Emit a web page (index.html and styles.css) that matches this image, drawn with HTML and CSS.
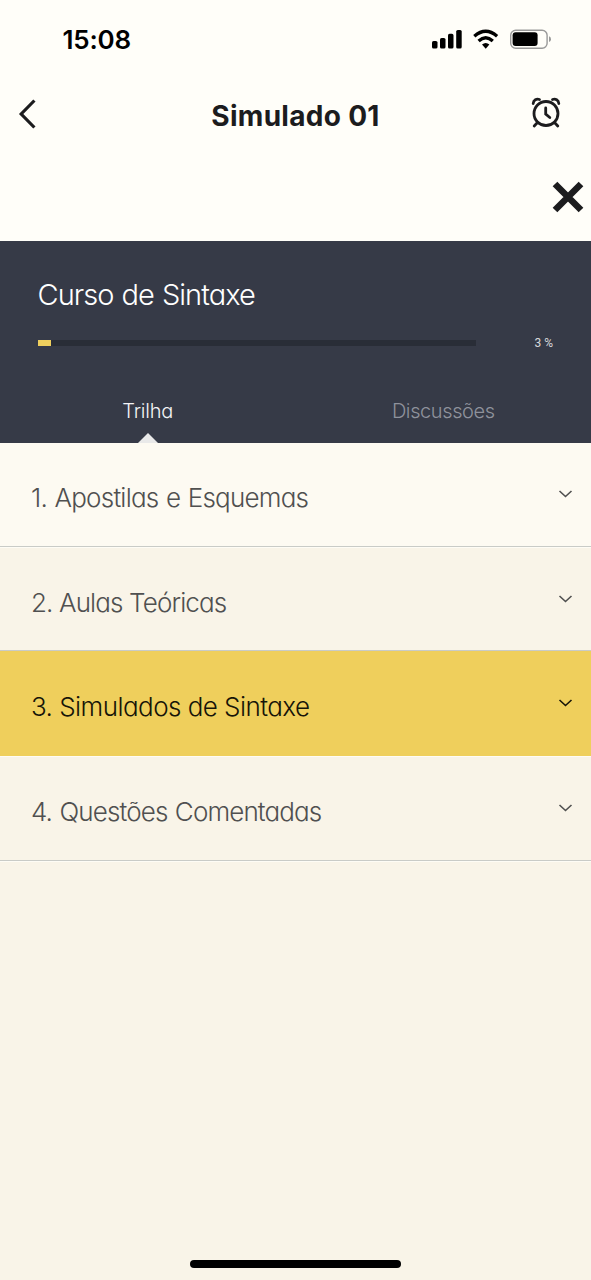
FILE: index.html
```html
<!DOCTYPE html>
<html lang="pt-BR">
<head>
<meta charset="utf-8">
<title>Simulado 01</title>
<link rel="stylesheet" href="styles.css">
</head>
<body>
<div class="status">
  <span class="time">15:08</span>
  <svg class="status-icons" width="122" height="24" viewBox="0 0 122 24">
    <rect x="2" y="14" width="5.500" height="7.500" rx="1.600"/>
    <rect x="10" y="11" width="5.500" height="10.500" rx="1.600"/>
    <rect x="18" y="6.800" width="5.500" height="14.700" rx="1.600"/>
    <rect x="26.200" y="3" width="5.500" height="18.500" rx="1.600"/>
    <g fill="none" stroke="#000" stroke-width="3.300">
      <path d="M44.300 9.300Q55.700-.7 67.100 9.300"/>
      <path d="M48.600 14Q55.700 7.600 62.800 14"/>
    </g>
    <path d="M52 17.500Q55.700 14.500 59.400 17.500L55.700 21.700Z"/>
    <rect x="80.700" y="3.200" width="36.400" height="18" rx="5" fill="none" stroke="#999" stroke-width="1.400"/>
    <rect x="82.600" y="5.300" width="25" height="13.800" rx="3"/>
    <path d="M119 9.300Q121 10 121 12.200T119 15.100Z" fill="#999"/>
  </svg>
</div>
<header class="nav">
  <svg class="back" width="24" height="36" viewBox="0 0 24 36"><path d="M19.400 5.500L6.200 19L19.400 32.500" fill="none" stroke="#1c1c1e" stroke-width="3.200"/></svg>
  <h1 class="nav-title">Simulado 01</h1>
  <svg class="alarm" width="32" height="34" viewBox="0 0 32 34" fill="none" stroke="#1c1c1e" stroke-width="2.800" stroke-linecap="round">
    <circle cx="16" cy="17.500" r="12"/>
    <path d="M15.700 12V18L19.800 21.500M7.500 26.500L4.200 30M24.500 26.500L27.800 30M3.200 7.500C3.500 4 6.500 2.500 9.500 3.500M28.800 7.500C28.500 4 25.500 2.500 22.500 3.500"/>
  </svg>
</header>
<div class="close-bar">
  <svg width="32" height="32" viewBox="0 0 32 32"><path d="M3 3L29 29M29 3L3 29" stroke="#1c1c1e" stroke-width="6.600"/></svg>
</div>
<section class="course">
  <h2 class="course-title">Curso de Sintaxe</h2>
  <div class="progress">
    <div class="track"><div class="fill" style="width:3%"></div></div>
    <span class="percent">3 %</span>
  </div>
  <nav class="tabs">
    <span class="tab active">Trilha</span>
    <span class="tab discussions">Discussões</span>
  </nav>
</section>
<main class="modules">
  <div class="module first"><span class="label m1">1. Apostilas e Esquemas</span><svg class="chev" width="14" height="8" viewBox="0 0 14 8"><path d="M1.500 1L7.500 6.500L13.500 1"/></svg></div>
  <div class="module second"><span class="label m2">2. Aulas Teóricas</span><svg class="chev" width="14" height="8" viewBox="0 0 14 8"><path d="M1.500 1L7.500 6.500L13.500 1"/></svg></div>
  <div class="module current"><span class="label m3">3. Simulados de Sintaxe</span><svg class="chev" width="14" height="8" viewBox="0 0 14 8"><path d="M1.500 1L7.500 6.500L13.500 1"/></svg></div>
  <div class="module"><span class="label m4">4. Questões Comentadas</span><svg class="chev" width="14" height="8" viewBox="0 0 14 8"><path d="M1.500 1L7.500 6.500L13.500 1"/></svg></div>
</main>
<div class="home"><div class="home-bar"></div></div>
</body>
</html>
```
FILE: styles.css
```css
* { box-sizing: border-box; }
body {
  margin: 0;
  height: 1280px;
  display: flex;
  flex-direction: column;
  background: #f9f4e8;
  font-family: Inter, "Noto Sans", sans-serif;
  overflow: hidden;
}
h1, h2 { margin: 0; }
svg { display: block; flex: none; }
.status, .nav, .close-bar { background: #fffef9; flex: none; }
.status {
  height: 76px;
  display: flex;
  justify-content: space-between;
  padding: 24px 39px 0 62.5px;
}
.time { font-size: 26px; line-height: 31px; font-weight: 600; letter-spacing: -0.2px; color: #000; }
.status-icons { margin-top: 3px; }
.nav {
  height: 84px;
  display: grid;
  grid-template-columns: 60px 1fr 60px;
  padding: 0 15px;
}
.back { margin-top: 19px; }
.nav-title { margin-top: 22px; line-height: 36px; font-size: 28px; font-weight: 650; letter-spacing: 0.3px; text-align: center; color: #1c1c1e; }
.alarm { margin: 20px 0 0 13.5px; }
.close-bar { height: 81px; display: flex; justify-content: flex-end; padding: 20.5px 7px 0 0; }
.course {
  flex: none;
  height: 201.500px;
  background: #363a47;
  padding: 36px 38px 0;
  display: flex;
  flex-direction: column;
  font-weight: 300;
  font-feature-settings: "cv11";
}
.course-title { font-size: 29px; line-height: 36px; font-weight: 300; color: #fff; letter-spacing: -0.95px; word-spacing: 0.8px; margin-left: -0.5px; }
.progress { display: flex; align-items: center; justify-content: space-between; margin-top: 22px; height: 16px; }
.track { width: 438px; height: 6px; background: #292d37; }
.fill { height: 6px; background: #efcf5e; }
.percent { font-family: Roboto, sans-serif; font-size: 12px; font-weight: 400; color: #d8d9dc; }
.tabs { display: grid; grid-template-columns: 1fr 1fr; margin: auto -38px 0; height: 46.500px; text-align: center; }
.tab { font-size: 20px; line-height: 30px; letter-spacing: -0.4px; color: #8f929c; }
.tab.active { color: #f3f3f5; letter-spacing: -0.2px; display: flex; flex-direction: column; align-items: center; justify-content: space-between; }
.active::after { content: ""; border: 10.500px solid transparent; border-top: 0; border-bottom-color: #e9e9e9; }
.modules { flex: none; font-weight: 300; font-feature-settings: "cv11"; }
.module {
  height: 105px;
  display: flex;
  justify-content: space-between;
  border-bottom: 1px solid #c9cbc7;
  box-shadow: 0 1px #fefcf5;
  padding: 37px 19px 0 31px;
  color: #505050;
}
.first { background: #fdfaf2; height: 104.500px; padding-top: 36px; }
.second { height: 104px; }
.current { background: #efcf5c; color: #161408; border-bottom-color: #efcf5c; }
.label { font-size: 26px; line-height: 38px; white-space: nowrap; }
.m1 { letter-spacing: -0.77px; word-spacing: 0.9px; }
.m2 { letter-spacing: -0.87px; }
.m3 { letter-spacing: -0.55px; }
.m4 { letter-spacing: -0.88px; word-spacing: 1px; }
.chev { margin-top: 11px; fill: none; stroke: currentColor; stroke-width: 1.6; overflow: visible; }
.home { margin-top: auto; display: flex; justify-content: center; padding-bottom: 12px; }
.home-bar { width: 211px; height: 8px; border-radius: 4px; background: #000; }
```
